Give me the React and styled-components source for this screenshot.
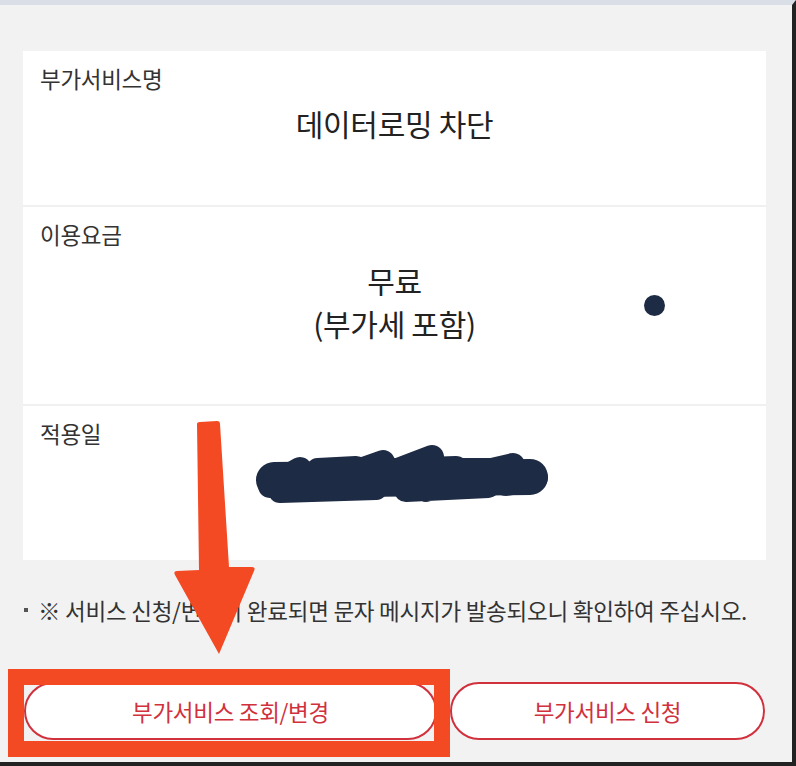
import React from "react";
import styled, { createGlobalStyle } from "styled-components";

const Global = createGlobalStyle`
  html, body { margin: 0; padding: 0; background: #f2f2f2; }
  * { box-sizing: border-box; }
  body { font-family: "Noto Sans CJK KR", "Noto Sans", sans-serif; }
`;

const Page = styled.div`
  position: relative;
  width: 796px;
  height: 766px;
  overflow: hidden;
  background: #f2f2f2;
  border-top: 5px solid #d9dee7;
  border-right: 4px solid #222;
  border-bottom: 4px solid #222;
  padding: 46px 26px 0 23px;
  display: flex;
  flex-direction: column;
`;

const Card = styled.div`
  background: #f0f0f0;
  display: flex;
  flex-direction: column;
  gap: 2px;
`;

const Row = styled.div`
  position: relative;
  height: ${(p) => p.$h}px;
  background: #fff;
  padding: 11px 17px 0;
  display: flex;
  flex-direction: column;
`;

const Label = styled.div`
  font-size: 22.5px;
  line-height: 32px;
  color: #333;
  letter-spacing: -0.3px;
`;

const Value = styled.div`
  margin-top: ${(p) => p.$mt}px;
  margin-left: ${(p) => p.$ml || 0}px;
  text-align: center;
  font-size: 30px;
  line-height: 43px;
  color: #222;
  letter-spacing: -0.3px;
  display: flex;
  flex-direction: column;
  align-items: center;
`;

const Dot = styled.span`
  position: absolute;
  left: 621px;
  top: 88px;
  width: 21px;
  height: 21px;
  border-radius: 50%;
  background: #1e2b44;
`;

const Note = styled.div`
  margin-top: 35px;
  display: flex;
  align-items: center;
  gap: 10px;
  font-size: 22.5px;
  line-height: 30px;
  color: #333;
  letter-spacing: -0.25px;
  white-space: nowrap;
`;

const Bullet = styled.span`
  width: 4px;
  height: 4px;
  background: #555;
  flex: none;
  margin-left: 1px;
`;

const Buttons = styled.div`
  margin-top: 57px;
  display: grid;
  grid-template-columns: 413px 315px;
  gap: 13px;
  padding-left: 1px;
`;

const PillButton = styled.button`
  height: 58px;
  border: 2px solid #d0313d;
  border-radius: 29px;
  background: #fff;
  color: #d0313d;
  font-family: "Noto Sans CJK KR", "Noto Sans", sans-serif;
  font-size: 22.5px;
  letter-spacing: -0.3px;
  padding: 0;
`;

const Overlay = styled.svg`
  position: absolute;
  left: 0;
  top: -5px;
  width: 796px;
  height: 766px;
  pointer-events: none;
`;

function Scribble() {
  return (
    <svg width="292" height="80" viewBox="0 0 292 80">
      <g stroke="#1e2b44" strokeLinecap="round" strokeLinejoin="round" fill="none">
        <path d="M18,50 L274,47" strokeWidth="36" />
        <path
          d="M14,56 L44,39 M40,58 L90,45 L127,32 M100,56 L176,27 M170,60 L210,46 L257,35 M240,50 L280,48 M24,61 L120,58 M150,60 L232,56 M250,54 L277,50 M62,40 L100,38 M140,40 L200,38 M196,40 L240,40"
          strokeWidth="24"
        />
      </g>
    </svg>
  );
}

export default function App() {
  return (
    <>
      <Global />
      <Page>
        <Card>
          <Row $h={154}>
            <Label>부가서비스명</Label>
            <Value $mt={8}>데이터로밍 차단</Value>
          </Row>
          <Row $h={197}>
            <Label>이용요금</Label>
            <Value $mt={9}>
              <span>무료</span>
              <span>(부가세 포함)</span>
            </Value>
            <Dot />
          </Row>
          <Row $h={154}>
            <Label>적용일</Label>
            <Value $mt={-19} $ml={14}>
              <Scribble />
            </Value>
          </Row>
        </Card>
        <Note>
          <Bullet />
          <span>※ 서비스 신청/변경이 완료되면 문자 메시지가 발송되오니 확인하여 주십시오.</span>
        </Note>
        <Buttons>
          <PillButton>부가서비스 조회/변경</PillButton>
          <PillButton>부가서비스 신청</PillButton>
        </Buttons>
        <Overlay viewBox="0 0 796 766">
          <rect x="16" y="677" width="426" height="72" fill="none" stroke="#f44a24" strokeWidth="16" />
          <path
            d="M197,424 Q197,422 200,422 L217,421 Q220,421 220,424 L229,567 L252,567 Q256,567 254,571 L219,654 L175,575 Q173,571 177,571 L199,570 Z"
            fill="#f44a24"
          />
        </Overlay>
      </Page>
    </>
  );
}
